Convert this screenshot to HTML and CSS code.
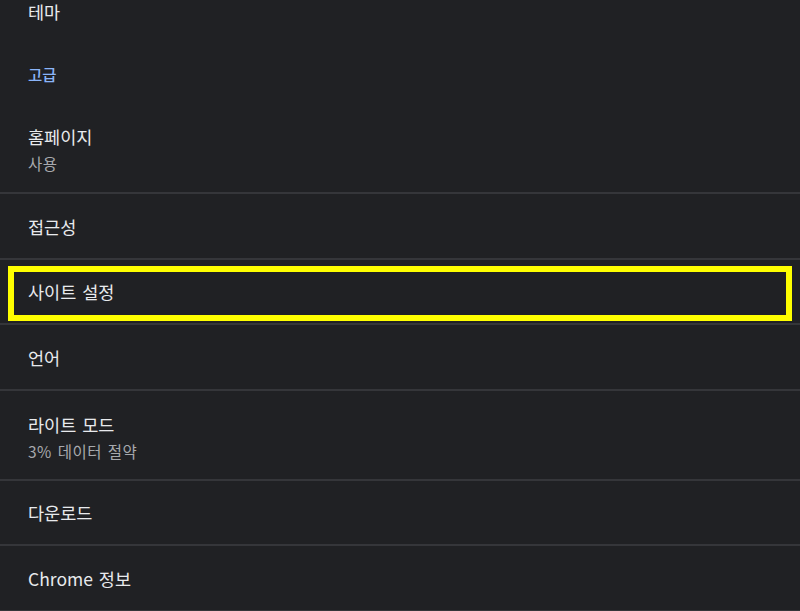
FILE: index.html
```html
<!DOCTYPE html>
<html lang="ko">
<head>
<meta charset="utf-8">
<title>설정</title>
<link rel="stylesheet" href="styles.css">
</head>
<body>
<div class="list">
  <div class="row plain"><span class="title">테마</span></div>
  <div class="header">고급</div>
  <div class="row two first">
    <span class="title">홈페이지</span>
    <span class="sub">사용</span>
  </div>
  <div class="row"><span class="title">접근성</span></div>
  <div class="row selected"><span class="title">사이트 설정</span><span class="focus"></span></div>
  <div class="row"><span class="title">언어</span></div>
  <div class="row two">
    <span class="title">라이트 모드</span>
    <span class="sub">3% 데이터 절약</span>
  </div>
  <div class="row"><span class="title">다운로드</span></div>
  <div class="row"><span class="title">Chrome 정보</span></div>
</div>
</body>
</html>
```

FILE: styles.css
```css
html, body {
  margin: 0;
  padding: 0;
  background: #202124;
  height: 100%;
  overflow: hidden;
}

body {
  font-family: "Noto Sans CJK KR", "Noto Sans", sans-serif;
  color: #e8eaed;
}

.list {
  display: flex;
  flex-direction: column;
  margin-top: -21px;
}

.row {
  position: relative;
  box-sizing: border-box;
  height: 65.5px;
  padding: 2px 28px 0;
  display: flex;
  flex-direction: column;
  justify-content: center;
  border-bottom: 2px solid #35363a;
}

.row.plain {
  height: 66px;
  padding-top: 0;
  border-bottom: none;
}

.row.two {
  height: 90px;
  padding-top: 4px;
}

.row.two.first {
  height: 92px;
}

.title {
  font-size: 17.5px;
  line-height: 24px;
  word-spacing: 1px;
  color: #e8eaed;
}

.sub {
  font-size: 15.5px;
  line-height: 20px;
  letter-spacing: 0.5px;
  word-spacing: 1px;
  margin-top: 4px;
  color: #a7a9ad;
}

.header {
  box-sizing: border-box;
  height: 57px;
  padding: 0 28px;
  display: flex;
  align-items: center;
  font-size: 15.5px;
  font-weight: 500;
  color: #8ab4f8;
}

.focus {
  position: absolute;
  left: 8px;
  right: 8px;
  top: 6px;
  bottom: 2px;
  border: 6px solid #ffff00;
}
```
